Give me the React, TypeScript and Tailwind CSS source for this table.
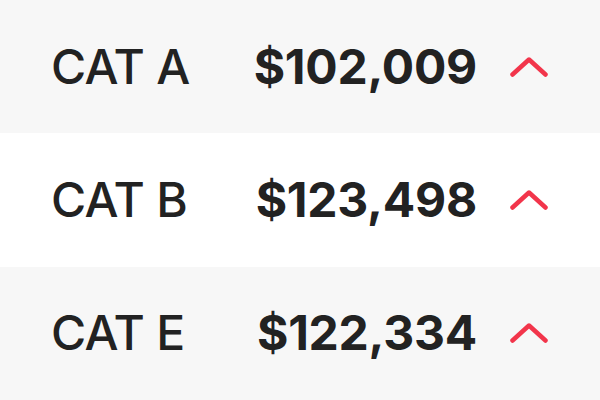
import React from 'react'

const rows = [
  { label: 'CAT A', value: '$102,009' },
  { label: 'CAT B', value: '$123,498' },
  { label: 'CAT E', value: '$122,334' }
]

const ChevronUp = () => (
  <svg width="38" height="20" viewBox="0 0 38 20" fill="none" className="shrink-0">
    <polyline
      points="2.5,17.5 19,2.5 35.5,17.5"
      stroke="#f2354b"
      strokeWidth="4.5"
      strokeLinecap="round"
      strokeLinejoin="round"
    />
  </svg>
)

export default function App() {
  return (
    <div className="w-[600px] h-[400px] flex flex-col bg-white font-['Inter',sans-serif] text-[#222222]">
      {rows.map((row, i) => (
        <div
          key={row.label}
          className={`flex-1 flex items-center pl-[51px] pr-[52px] ${i % 2 === 0 ? 'bg-[#f7f7f7]' : 'bg-white'}`}
        >
          <div className="flex-1 text-[48px] font-medium leading-none tracking-[-0.015em]">{row.label}</div>
          <div className="text-[48px] font-bold leading-none tracking-[-0.005em]">{row.value}</div>
          <div className="ml-[33px]">
            <ChevronUp />
          </div>
        </div>
      ))}
    </div>
  )
}
